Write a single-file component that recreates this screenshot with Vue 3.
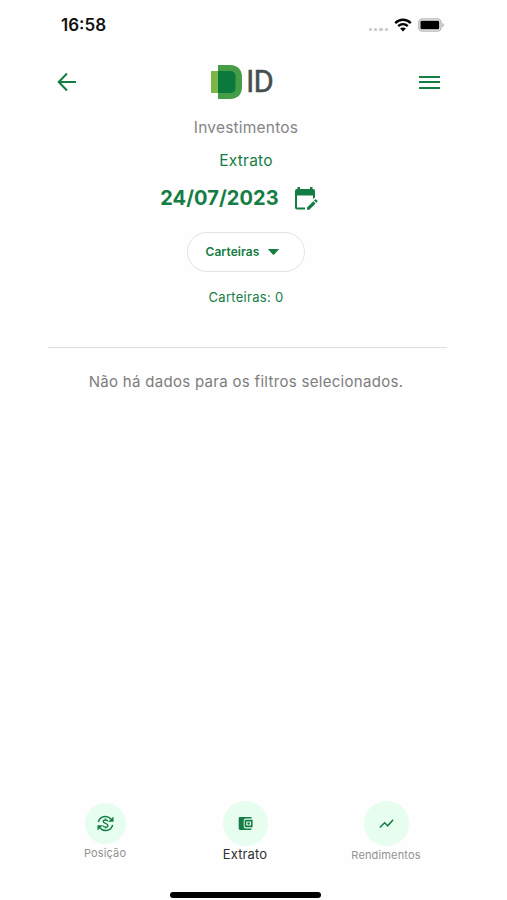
<script setup>
const tabs = [
  { id: 'posicao', label: 'Posição' },
  { id: 'extrato', label: 'Extrato' },
  { id: 'rendimentos', label: 'Rendimentos' },
]
const active = 'extrato'
</script>

<template>
  <div class="screen">
    <div class="status">
      <span class="clock">16:58</span>
      <div class="indicators">
        <div class="signal"><i v-for="n in 4" :key="n"></i></div>
        <svg class="wifi" viewBox="0 0 18 14">
          <g fill="none" stroke="#000" stroke-width="2.4">
            <path d="M1.2 5.1C5.7.7 12.3.7 16.8 5.1" />
            <path d="M4.2 8.1c2.800-2.600 6.800-2.600 9.600 0" />
          </g>
          <path d="M9 13.400 6.100 10.500c1.600-1.500 4.200-1.500 5.800 0z" />
        </svg>
        <svg class="battery" viewBox="0 0 26 14">
          <rect x=".8" y=".9" width="22.200" height="12.200" rx="3.600" fill="#eee" stroke="#b9b9b9" stroke-width="1.400" />
          <rect x="2.500" y="2.800" width="18.700" height="8.400" rx="1.200" />
          <path d="M24.300 5c2 .5 2 3.500 0 4z" fill="#aaa" />
        </svg>
      </div>
    </div>

    <header class="header">
      <svg class="back" viewBox="0 0 20 20" fill="none" stroke="#147d43" stroke-width="2">
        <path d="M19 10H2M10 1.500 1.700 10l8.300 8.500" />
      </svg>
      <div class="brand">
        <svg class="mark" viewBox="0 0 32 36">
          <path fill="#7ab648" d="M0 7h7v22H0z" />
          <path fill="#469d48" d="M7 1h12c8 0 12 5 12 12v10c0 7-4 12-12 12H7z" />
          <path fill="#0b793b" d="M7 7h12c3.800 0 5.500 2.200 5.500 5.500v11c0 3.300-1.700 5.500-5.500 5.500H7z" />
        </svg>
        <span class="brand-name">ID</span>
      </div>
      <div class="menu"><i></i><i></i><i></i></div>
    </header>

    <main class="content">
      <div class="section">Investimentos</div>
      <div class="title">Extrato</div>
      <div class="date-row">
        <span class="date">24/07/2023</span>
        <svg class="calendar" viewBox="0 0 24 25">
          <path fill="#147d43" fill-rule="evenodd" d="M3.500 1h2.500v2h10V1h2.500v2H19q2 0 2 2v6.500l-2 1.500V9.500H3V21.500h8v2H3q-2 0-2-2V5q0-2 2-2h.5z" />
          <path fill="#147d43" d="M13 21.400 19.300 15.200l2.300 2.300-6.300 6.200H13zM20 14.500l1-1q.6-.5 1.200 0l1.100 1.100q.6.600 0 1.200l-1 1z" />
        </svg>
      </div>
      <button class="wallets">
        <span>Carteiras</span>
        <svg class="caret" viewBox="0 0 11 6"><path d="M.5 0h10q.6 0 .2.500L6.200 5.500q-.7.700-1.400 0L.3.500Q-.1 0 .5 0z" fill="#147d43" /></svg>
      </button>
      <div class="count">Carteiras: 0</div>
      <div class="divider"></div>
      <p class="empty">Não há dados para os filtros selecionados.</p>
    </main>

    <nav class="tabs">
      <div v-for="tab in tabs" :key="tab.id" class="tab" :class="[tab.id, { active: tab.id === active }]">
        <div class="bubble">
          <svg v-if="tab.id === 'posicao'" class="icon" viewBox="0 0 18 18" fill="none" stroke="#147d43">
            <path stroke-width="1.600" d="M1.500 7.500C2.800 1 10.500-.3 14.800 4.300M16.500 10.500C15.200 17 7.500 18.300 3.200 13.700" />
            <path fill="#147d43" stroke="none" d="M17.500 1.500v5.700h-5.700zM.5 16.500v-5.700h5.700z" />
            <path stroke-width="1.400" d="M11.600 6.800C11 4.800 6.700 4.700 6.600 7c0 2.300 5 1.600 5 4.100 0 2.300-4.600 2.300-5.200.1M9 3.700v1.500M9 12.800v1.500" />
          </svg>
          <svg v-else-if="tab.id === 'extrato'" class="icon" viewBox="0 0 18 18" fill="#147d43">
            <path d="M3.300 2.200h11q1.400 0 1.400 1.500H9.300Q7.100 3.700 7.100 6v6q0 2.300 2.200 2.300h6.400q0 1.500-1.400 1.500h-11q-1.500 0-1.500-1.500V3.700q0-1.500 1.500-1.500z" />
            <path fill-rule="evenodd" d="M9.300 4.900h7.200v8.200H9.300q-1.200 0-1.200-1.200V6.100q0-1.200 1.200-1.200zM10.500 6.900q-.7 0-.7.700v2.800q0 .7.700.7h3.700q.7 0 .7-.7V7.600q0-.7-.7-.7z" />
            <circle cx="12.300" cy="9" r="1.300" />
          </svg>
          <svg v-else class="icon" viewBox="0 0 18 18" fill="none" stroke="#147d43" stroke-width="1.600">
            <path d="m2 13.200 5-5 3.300 3.300L16 5" />
          </svg>
        </div>
        <span class="label">{{ tab.label }}</span>
      </div>
    </nav>
    <div class="home-bar"></div>
  </div>
</template>

<style>
body { background: #fefefe; }
</style>

<style scoped>
.screen {
  box-sizing: border-box;
  width: 507px;
  height: 900px;
  display: flex;
  flex-direction: column;
  padding-bottom: 2px;
  background: #fefefe;
  color: #147d43;
  font-family: Inter, "Liberation Sans", sans-serif;
  overflow: hidden;
}
svg { display: block; flex: none; }
.status {
  height: 50px;
  flex: none;
  display: flex;
  align-items: center;
  justify-content: space-between;
  padding: 0 63px 0 61px;
}
.clock { font-size: 17px; font-weight: 600; color: #111; line-height: 20px; }
.indicators { display: flex; align-items: center; }
.signal { display: flex; gap: 2px; margin: 9px 6px 0 0; }
.signal i { width: 3.300px; height: 3.300px; border-radius: 1px; background: #ccc; }
.wifi { width: 18px; height: 14px; margin-right: 6px; }
.battery { width: 26px; height: 14px; }
.header {
  height: 64px;
  flex: none;
  display: flex;
  align-items: center;
  padding: 0 67px 0 57px;
}
.back { width: 20px; height: 20px; }
.brand { display: flex; align-items: center; gap: 3px; margin-left: 134px; }
.mark { width: 32px; height: 36px; }
.brand-name { font-family: Roboto, sans-serif; font-size: 31px; font-weight: 400; color: #464f50; line-height: 32px; letter-spacing: -1px; -webkit-text-stroke: .4px #464f50; }
.menu { width: 21px; display: flex; flex-direction: column; gap: 3.500px; margin-left: auto; }
.menu i { height: 2px; background: #147d43; }
.content {
  width: 400px;
  flex: 1;
  display: flex;
  flex-direction: column;
  align-items: center;
  padding-left: 46px;
}
.section { margin-top: 4px; font-size: 15.500px; line-height: 20px; color: #858585; letter-spacing: .2px; }
.title { margin-top: 13px; font-size: 15.500px; line-height: 20px; letter-spacing: .2px; }
.date-row { margin-top: 14px; display: flex; align-items: center; height: 26px; gap: 15px; margin-left: -14px; }
.date { font-size: 20px; font-weight: 700; letter-spacing: .1px; }
.calendar { width: 24px; height: 25px; }
.wallets {
  box-sizing: border-box;
  width: 118px;
  height: 40px;
  margin-top: 21px;
  padding: 0 8px 2px 0;
  display: flex;
  align-items: center;
  justify-content: center;
  gap: 8px;
  border: 1px solid #e2e2e2;
  border-radius: 20px;
  background: #fff;
  color: #147d43;
  font: 600 12px Inter, sans-serif;
  letter-spacing: .1px;
}
.caret { width: 11px; height: 6px; margin-top: 1px; }
.count { margin-top: 15px; font-size: 13px; line-height: 20px; letter-spacing: .3px; }
.divider { width: 399px; height: 1px; margin: 40px 0 0 3px; background: #dedede; }
.empty { margin: 24px 0 0; font-size: 15px; line-height: 20px; color: #7d7d7d; letter-spacing: .3px; white-space: nowrap; }
.tabs { height: 80px; flex: none; display: flex; width: 422px; margin-left: 34px; }
.tab { flex: 1; display: flex; flex-direction: column; align-items: center; color: #929292; font-size: 11px; letter-spacing: .15px; }
.bubble { width: 45px; height: 45px; border-radius: 50%; background: #e6fdf0; display: flex; align-items: center; justify-content: center; }
.posicao { padding-left: 1px; }
.posicao .bubble { width: 41px; height: 41px; margin-top: 2px; }
.icon { width: 17px; height: 17px; }
.label { line-height: 16px; }
.posicao .label { margin-top: 1px; }
.rendimentos { padding-left: 1px; }
.rendimentos .label { margin-top: 1px; }
.active { color: #303030; font-size: 13px; }
.home-bar { width: 151px; height: 6px; margin: 11px 0 0 170px; border-radius: 3px; background: #000; flex: none; }
</style>
